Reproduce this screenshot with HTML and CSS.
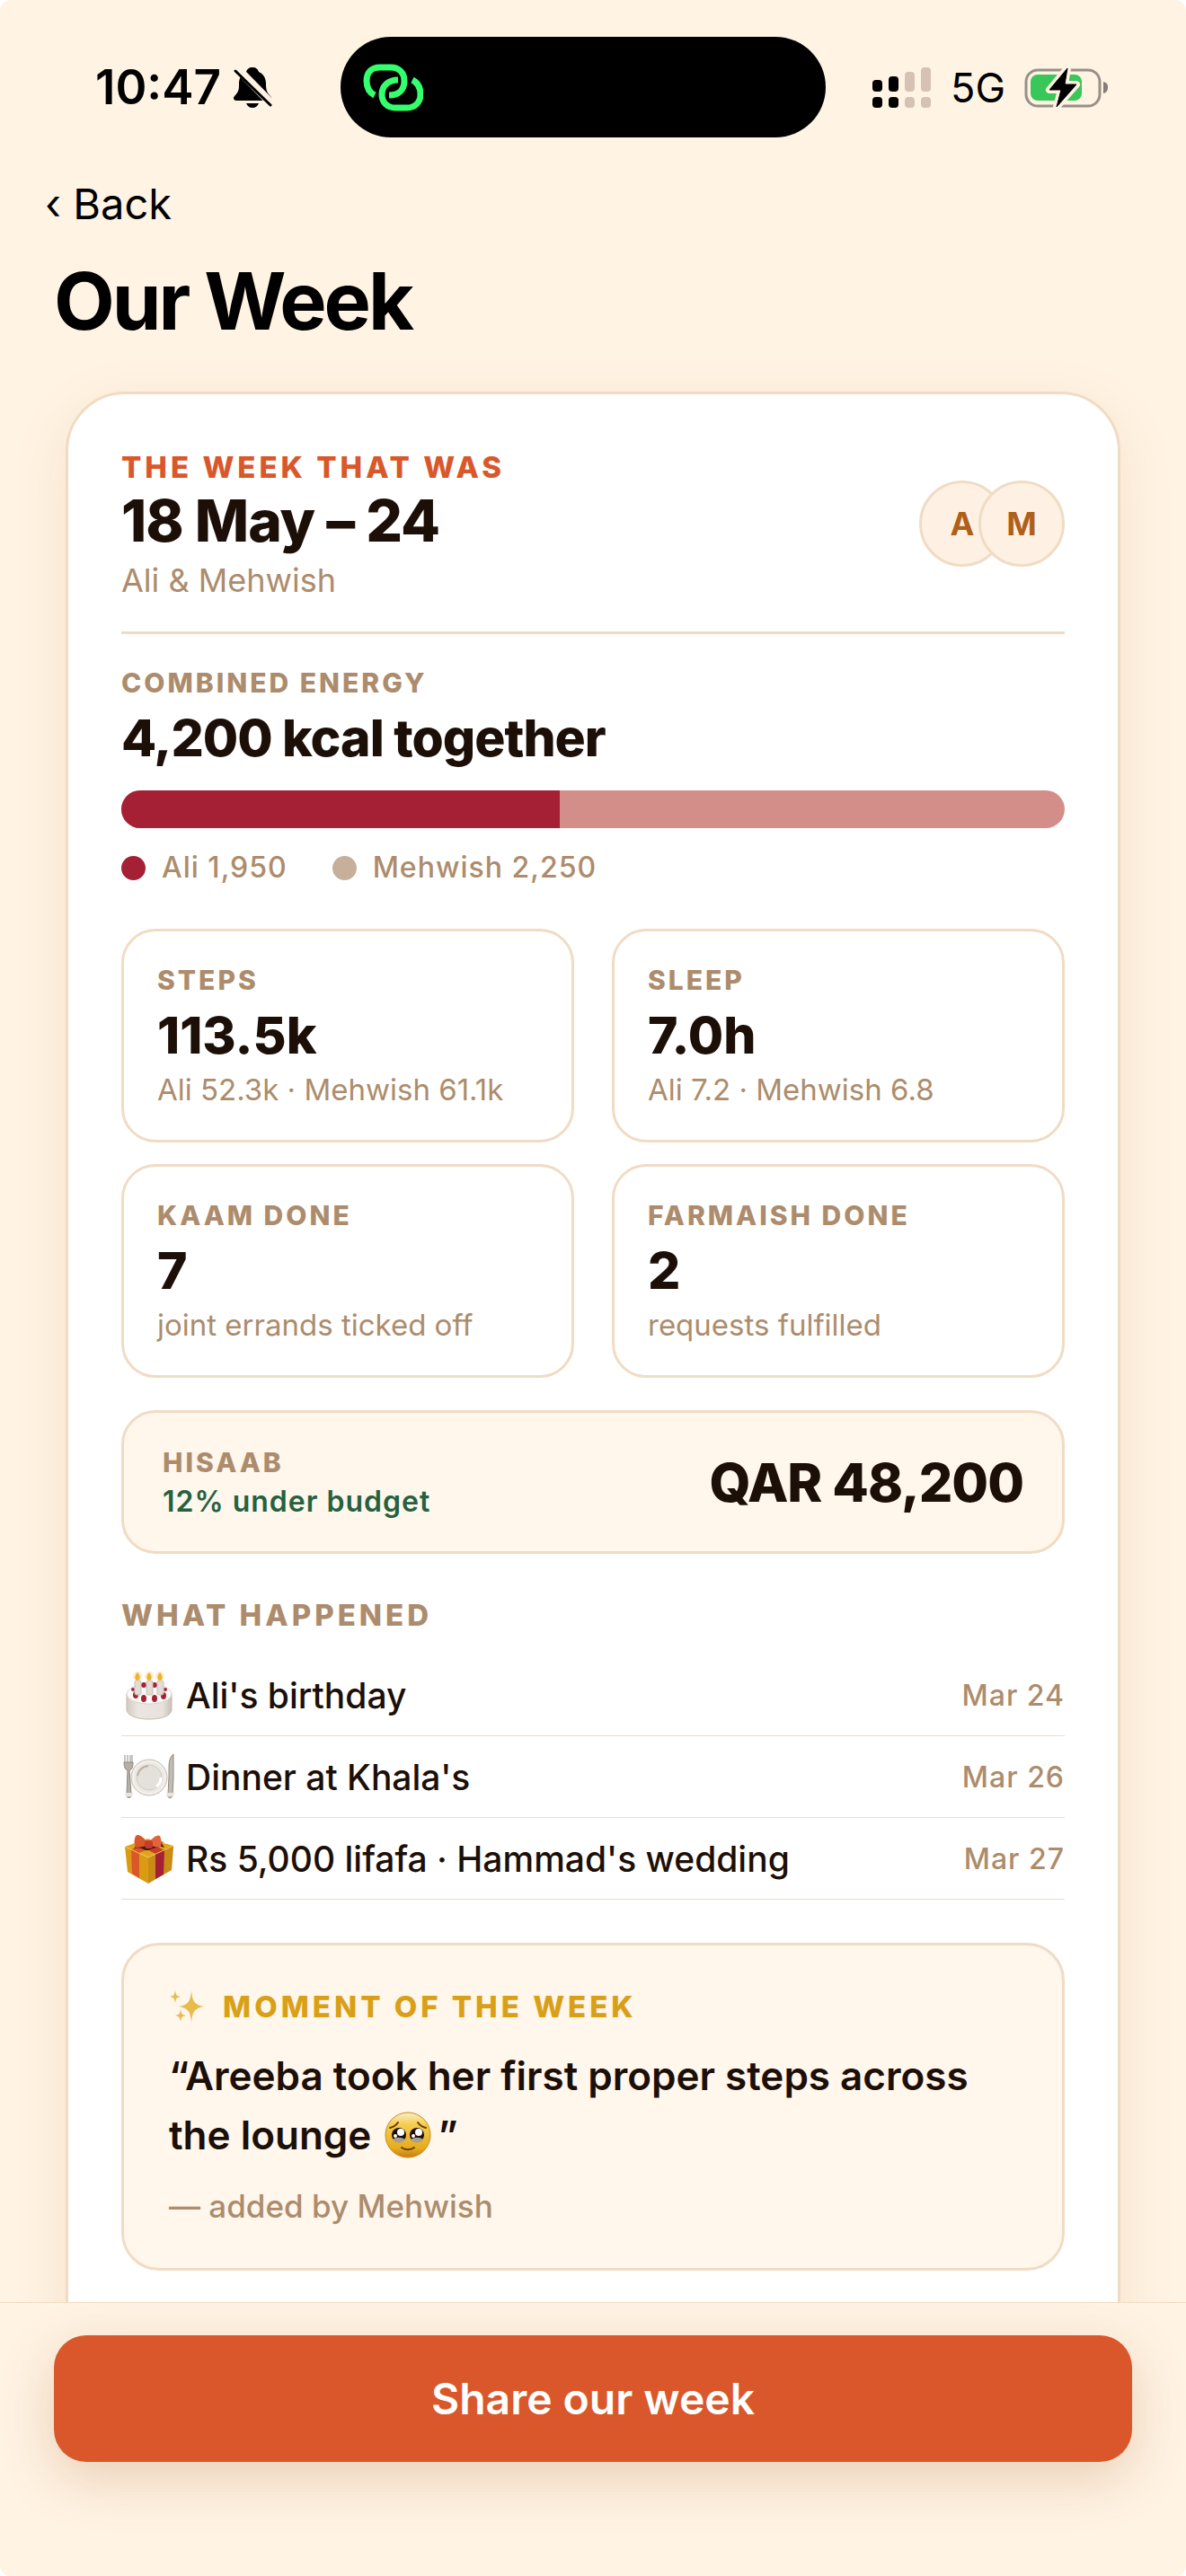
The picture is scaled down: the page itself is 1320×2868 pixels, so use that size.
FILE: index.html
```html
<!DOCTYPE html>
<html lang="en">
<head>
	<meta charset="UTF-8">
	<meta name="viewport" content="width=device-width, initial-scale=1">
	<title>Our Week</title>
	<link rel="stylesheet" href="styles.css">
</head>
<body>
	<div class="screen">
		<div class="status-bar">
			<div class="status-left">
				<span class="clock">10:47</span>
				<svg class="bell" width="43" height="45" viewBox="0 0 43 45" aria-hidden="true">
					<path d="M21 0c4 0 6 2 7 5 5 2 8 7 8 13 0 7 1 10 5 14 2 2 2 5-1 5H3c-3 0-4-3-2-5 5-5 5-8 5-14C6 12 9 7 14 5c1-3 3-5 7-5z"/>
					<path d="M14 40h14c-1 3-4 5-7 5s-6-2-7-5z"/>
					<path d="M2 -1L42 40" stroke="#fff3e4" stroke-width="9"/>
					<path d="M2 4L41 42" stroke="#000" stroke-width="3" stroke-linecap="round"/>
				</svg>
			</div>
			<div class="island">
				<svg width="67" height="53" viewBox="0 0 67 53" fill="none" stroke="#34ff6c" stroke-width="7" aria-hidden="true">
					<path d="M13 35C7 32 4 26 4 19 4 9 10 4 19 4h12c9 0 15 6 15 15 0 10-6 16-17 16"/>
					<path d="M39 18C28 18 21 25 21 34c0 9 6 15 15 15h13c9 0 15-6 15-15 0-7-3-13-9-16"/>
				</svg>
			</div>
			<div class="status-right">
				<svg width="66" height="45" viewBox="0 0 66 45" aria-hidden="true">
					<rect x="0" y="14" width="11" height="13" rx="4"/>
					<rect x="18" y="10" width="11" height="17" rx="4"/>
					<rect x="0" y="33" width="11" height="12" rx="4"/>
					<rect x="18" y="33" width="11" height="12" rx="4"/>
					<g fill="#d5c2b4">
						<rect x="36" y="5" width="11" height="22" rx="4"/>
						<rect x="54" y="0" width="11" height="27" rx="4"/>
						<rect x="36" y="33" width="11" height="12" rx="4"/>
						<rect x="54" y="33" width="11" height="12" rx="4"/>
					</g>
				</svg>
				<span class="network">5G</span>
				<svg width="94" height="45" viewBox="0 0 94 45" aria-hidden="true">
					<rect x="2" y="3" width="82" height="40" rx="13" fill="none" stroke="#989088" stroke-width="3"/>
					<path d="M88 16c4 1 5 3 5 6s-1 6-5 7z" fill="#857d75"/>
					<rect x="7" y="8" width="57" height="29" rx="8" fill="#39c759"/>
					<path d="M48 1L28 25h13l-5 19 22-25H45z" stroke="#fff3e4" stroke-width="8" stroke-linejoin="round"/>
					<path d="M48 1L28 25h13l-5 19 22-25H45z" stroke="#000" stroke-width="1" stroke-linejoin="round"/>
				</svg>
			</div>
		</div>

		<main class="content">
			<a class="back" href="#">‹ Back</a>
			<h1>Our Week</h1>

			<article class="card">
				<header class="card-head">
					<div>
						<p class="eyebrow">THE WEEK THAT WAS</p>
						<h2 class="dates">18 May – 24</h2>
						<p class="names">Ali &amp; Mehwish</p>
					</div>
					<div class="avatars">
						<span>A</span>
						<span>M</span>
					</div>
				</header>

				<section class="energy">
					<h3 class="label">COMBINED ENERGY</h3>
					<p class="total">4,200 kcal together</p>
					<div class="bar"><div style="width: 46.43%"></div></div>
					<ul class="legend">
						<li class="ali">Ali 1,950</li>
						<li class="mehwish">Mehwish 2,250</li>
					</ul>
				</section>

				<section class="stats">
					<div class="stat">
						<h3 class="label">STEPS</h3>
						<p class="figure">113.5k</p>
						<p class="note">Ali 52.3k · Mehwish 61.1k</p>
					</div>
					<div class="stat">
						<h3 class="label">SLEEP</h3>
						<p class="figure">7.0h</p>
						<p class="note">Ali 7.2 · Mehwish 6.8</p>
					</div>
					<div class="stat">
						<h3 class="label">KAAM DONE</h3>
						<p class="figure">7</p>
						<p class="note">joint errands ticked off</p>
					</div>
					<div class="stat">
						<h3 class="label">FARMAISH DONE</h3>
						<p class="figure">2</p>
						<p class="note">requests fulfilled</p>
					</div>
				</section>

				<section class="hisaab">
					<div>
						<h3 class="label">HISAAB</h3>
						<p class="budget">12% under budget</p>
					</div>
					<p class="amount">QAR 48,200</p>
				</section>

				<section class="happened">
					<h3>WHAT HAPPENED</h3>
					<ul>
						<li>
							<!-- birthday cake -->
							<svg class="emoji" width="60" height="60" viewBox="0 0 60 60" aria-hidden="true">
								<defs>
									<linearGradient id="cake" x1="0" x2="1">
										<stop offset="0" stop-color="#d3cbc2"/>
										<stop offset=".25" stop-color="#ebe6e1"/>
										<stop offset=".8" stop-color="#e7e2dd"/>
										<stop offset="1" stop-color="#c9c0b6"/>
									</linearGradient>
								</defs>
								<path d="M6 29v17c0 7 11 11 25 11s25-4 25-11V29z" fill="url(#cake)" stroke="#c5b9ac"/>
								<ellipse cx="31" cy="29" rx="25" ry="11" fill="#fbf9f7" stroke="#ddd5cc"/>
								<g fill="#a62035">
									<circle cx="13" cy="24" r="2"/><circle cx="25" cy="19" r="3"/><circle cx="37" cy="19" r="3"/><circle cx="49" cy="24" r="2"/>
									<ellipse cx="16" cy="30" rx="3" ry="4"/><ellipse cx="25" cy="34" rx="3" ry="4"/><ellipse cx="37" cy="34" rx="3" ry="4"/><ellipse cx="47" cy="31" rx="3" ry="4"/>
								</g>
								<g fill="#e2dcd5" stroke="#c9bfb4" stroke-width="1">
									<rect x="15" y="14" width="7" height="16" rx="2"/>
									<rect x="28" y="14" width="7" height="16" rx="2"/>
									<rect x="40" y="14" width="7" height="16" rx="2"/>
								</g>
								<g fill="#ffeccf">
									<circle cx="18" cy="9" r="5"/><circle cx="31" cy="9" r="5"/><circle cx="43" cy="9" r="5"/>
								</g>
								<path d="M18 5c4 4 3 9 0 9s-4-5 0-9zM31 5c4 4 3 9 0 9s-4-5 0-9zM43 5c4 4 3 9 0 9s-4-5 0-9z" fill="#ecb526"/>
							</svg>
							<span class="what">Ali's birthday</span>
							<time>Mar 24</time>
						</li>
						<li>
							<!-- fork, plate and knife -->
							<svg class="emoji" width="60" height="60" viewBox="0 0 60 60" aria-hidden="true">
								<circle cx="31" cy="31" r="20" fill="#ece8e4" stroke="#cbbfb2" stroke-width="1"/>
								<circle cx="31" cy="31" r="18" fill="none" stroke="#faf8f6" stroke-width="1"/>
								<circle cx="31" cy="31" r="14" fill="#e4e0db" stroke="#d5ccc2" stroke-width="1"/>
								<path d="M18 29c1-6 5-10 12-11" fill="none" stroke="#c1b1a2" stroke-width="2"/>
								<path d="M44 31c0 5-2 8-5 10" fill="none" stroke="#fff" stroke-width="3"/>
								<path d="M4 6v10M7 6v10M10 6v10M12 6v10" stroke="#8f8982" stroke-width="1"/>
								<path d="M3 14h10c0 6-1 8-4 9l2 26c1 6-6 6-5 0l1-26c-3-1-4-4-4-9z" fill="#b5afa8" stroke="#8f8982" stroke-width="1"/>
								<path d="M58 5v27l-1 18c0 5-6 5-5 0l1-20V20c0-8 2-13 5-15z" fill="#c3bcb4" stroke="#8f8982" stroke-width="1"/>
								<path d="M6 50h5M52 50h5" stroke="#e9e4df" stroke-width="4" stroke-linecap="round"/>
							</svg>
							<span class="what">Dinner at Khala's</span>
							<time>Mar 26</time>
						</li>
						<li>
							<!-- wrapped gift -->
							<svg class="emoji" width="60" height="60" viewBox="0 0 60 60" aria-hidden="true">
								<path d="M4 17l25-9 29 8-27 13z" fill="#e0a51c"/>
								<path d="M4 17l26 12v29L7 45z" fill="#d99b14"/>
								<path d="M58 16v2l-2 25-26 15V29z" fill="#c98a16"/>
								<path d="M11 20l9 4v28l-8-5z" fill="#d9572a"/>
								<path d="M38 25l10-4-1 27-9 5z" fill="#a62035"/>
								<path d="M11 20l29-10 8 2-28 12z" fill="#d9572a"/>
								<path d="M16 13l22 12 10-4-22-11z" fill="#c83b2c"/>
								<path d="M14 19c8-3 12 3 16 2s12-6 18-3l-4-6H20z" fill="#3a1c10"/>
								<path d="M30 14C25 6 19 2 16 5c-2 4-2 9 0 13 5 0 10-1 14-4z" fill="#d9572a"/>
								<path d="M30 14c4-7 10-11 13-9 2 4 2 9 1 12-4 1-10 0-14-3z" fill="#e0653d"/>
								<rect x="26" y="10" width="9" height="9" rx="3" fill="#c83b2c"/>
								<path d="M4 17l26 12 28-13" fill="none" stroke="#efc04a"/>
							</svg>
							<span class="what">Rs 5,000 lifafa · Hammad's wedding</span>
							<time>Mar 27</time>
						</li>
					</ul>
				</section>

				<section class="moment">
					<h3>
						<svg width="40" height="38" viewBox="0 0 40 38" fill="#e8bb4b" aria-hidden="true">
							<path d="M25 1c1 12 3 16 14 18-11 2-13 6-14 18-1-12-3-16-14-18C22 17 24 13 25 1z"/>
							<path d="M7 1c1 5 1 6 6 7-5 1-5 2-6 7-1-5-1-6-6-7 5-1 5-2 6-7zM13 22c1 5 1 6 6 7-5 1-5 2-6 7-1-5-1-6-6-7 5-1 5-2 6-7z"/>
						</svg>
						<span>MOMENT OF THE WEEK</span>
					</h3>
					<blockquote>“Areeba took her first proper steps across the lounge
						<svg class="face" width="54" height="52" viewBox="0 0 54 52" aria-hidden="true">
							<defs>
								<linearGradient id="face" x1="0" x2="0" y1="0" y2="1">
									<stop offset="0" stop-color="#fbeecb"/>
									<stop offset=".25" stop-color="#f5cf52"/>
									<stop offset=".8" stop-color="#e5ab1d"/>
									<stop offset="1" stop-color="#c47e14"/>
								</linearGradient>
							</defs>
							<circle cx="27" cy="26" r="25" fill="url(#face)" stroke="#c9891a" stroke-width="1"/>
							<circle cx="17" cy="26" r="8" fill="#1c0f08"/>
							<circle cx="37" cy="26" r="8" fill="#1c0f08"/>
							<path d="M10 31c4-3 9-3 14 0-2 4-11 5-14 0zM30 31c5-3 10-3 14 0-3 5-12 4-14 0z" fill="#a99f94"/>
							<g fill="#fff">
								<circle cx="19" cy="23" r="4"/><circle cx="39" cy="23" r="4"/>
								<circle cx="13" cy="27" r="2"/><circle cx="33" cy="27" r="2"/>
							</g>
							<path d="M7 18c4-1 7-3 9-6M47 18c-4-1-7-3-9-6" fill="none" stroke="#6b3a10" stroke-width="2" stroke-linecap="round"/>
							<path d="M20 40c4 3 10 3 14 0" fill="none" stroke="#6b3a10" stroke-width="2" stroke-linecap="round"/>
						</svg>”</blockquote>
					<p class="by">— added by Mehwish</p>
				</section>
			</article>
		</main>

		<footer class="actions">
			<button type="button">Share our week</button>
		</footer>
	</div>
</body>
</html>
```
FILE: styles.css
```css
* {
	box-sizing: border-box;
}

html {
	background: #fff;
}

body {
	margin: 0;
	color: #1c0f08;
	font-family: Inter, Roboto, "Liberation Sans", sans-serif;
}

h1, h2, h3, p, ul, blockquote {
	margin: 0;
	padding: 0;
	font-weight: 400;
}

ul {
	list-style: none;
}

svg {
	display: block;
	flex: none;
}

.screen {
	display: flex;
	flex-direction: column;
	height: 100vh;
	overflow: hidden;
	border-radius: 12px;
	background: #fff3e4;
}

/**
 * Status bar
 */
.status-bar {
	display: grid;
	grid-template-columns: 1fr 540px 1fr;
	align-items: center;
	padding: 41px 86px 0 64px;
	color: #000;
}

.status-left, .status-right {
	display: flex;
	align-items: center;
}

.status-left {
	gap: 14px;
	padding-left: 42px;
}

.status-right {
	justify-content: flex-end;
	gap: 21px;
}

.clock {
	font-size: 53px;
	font-weight: 600;
}

.network {
	font-size: 45px;
}

.island {
	display: flex;
	align-items: center;
	height: 112px;
	padding-left: 25px;
	border-radius: 56px;
	background: #000;
}

/**
 * Page
 */
.content {
	flex: 1;
	min-height: 0;
	padding: 44px 73px 60px;
	overflow-y: auto;
	scrollbar-width: none;
}

.back {
	display: block;
	width: max-content;
	margin-left: -23px;
	color: #000;
	font-size: 47px;
	line-height: 60px;
	text-decoration: none;
}

h1 {
	margin: 24px 0 47px -13px;
	color: #000;
	font-size: 88px;
	font-weight: 700;
	line-height: 108px;
	letter-spacing: -3px;
}

.card {
	padding: 57px 59px 160px;
	border: 3px solid #f0dcc4;
	border-radius: 66px;
	background: #fff;
	box-shadow: 0 18px 60px rgba(190,130,50,.14);
}

.label {
	color: #ac8c6c;
	font-size: 30px;
	font-weight: 800;
	line-height: 40px;
	letter-spacing: 3px;
}

/**
 * Card head
 */
.card-head {
	display: flex;
	justify-content: space-between;
	align-items: center;
	padding-bottom: 33px;
	border-bottom: 3px solid #f0dcc4;
}

.eyebrow {
	color: #d9572a;
	font-size: 33px;
	font-weight: 800;
	line-height: 48px;
	letter-spacing: 4px;
}

.dates {
	font-size: 64px;
	font-weight: 800;
	line-height: 72px;
	letter-spacing: -1px;
}

.names {
	margin-top: 6px;
	color: #ac8c6c;
	font-size: 36px;
	line-height: 48px;
}

.avatars {
	display: flex;
}

.avatars span {
	width: 96px;
	height: 96px;
	border: 3px solid #f0dcc4;
	border-radius: 50%;
	background: #fef1e3;
	color: #b05f1a;
	font-size: 36px;
	font-weight: 700;
	line-height: 90px;
	text-align: center;
}

.avatars span + span {
	margin-left: -30px;
}

/**
 * Combined energy
 */
.energy {
	padding-top: 34px;
}

.total {
	font-size: 57px;
	font-weight: 800;
	line-height: 84px;
	letter-spacing: -1px;
}

.bar {
	height: 42px;
	margin-top: 16px;
	border-radius: 21px;
	background: #d48e8a;
	overflow: hidden;
}

.bar div {
	height: 100%;
	background: #a62035;
}

.legend {
	display: flex;
	gap: 50px;
	margin-top: 24px;
	color: #ac8c6c;
	font-size: 32px;
	font-weight: 500;
	line-height: 40px;
	letter-spacing: 1px;
}

.legend li {
	display: flex;
	align-items: center;
	gap: 18px;
}

.legend li:before {
	content: '';
	width: 27px;
	height: 27px;
	border-radius: 50%;
}

.ali:before { background: #a62035; }
.mehwish:before { background: #c6b09c; }

/**
 * Stat tiles
 */
.stats {
	display: grid;
	grid-template-columns: 1fr 1fr;
	gap: 24px 42px;
	margin-top: 48px;
}

.stat {
	padding: 34px 37px 38px;
	border: 3px solid #f0dcc4;
	border-radius: 38px;
}

.figure {
	font-size: 57px;
	font-weight: 800;
	line-height: 84px;
}

.note {
	color: #ac8c6c;
	font-size: 33px;
	line-height: 36px;
}

.hisaab {
	display: flex;
	justify-content: space-between;
	align-items: center;
	margin-top: 36px;
	padding: 33px 43px;
	border: 3px solid #f0dcc4;
	border-radius: 38px;
	background: #fff6ec;
}

.hisaab .label {
	line-height: 44px;
}

.budget {
	color: #25613f;
	font-size: 32px;
	font-weight: 600;
	line-height: 44px;
	letter-spacing: 1px;
}

.amount {
	font-size: 59px;
	font-weight: 800;
	letter-spacing: -1px;
}

/**
 * What happened
 */
.happened {
	margin-top: 48px;
}

.happened h3 {
	margin-bottom: 24px;
	color: #ac8c6c;
	font-size: 33px;
	font-weight: 800;
	line-height: 40px;
	letter-spacing: 4px;
}

.happened li {
	display: flex;
	align-items: center;
	gap: 12px;
	height: 91px;
	border-bottom: 1px solid #f0dcc4;
	font-size: 39px;
	font-weight: 500;
}

.what {
	flex: 1;
}

.happened time {
	color: #ac8c6c;
	font-size: 32px;
	letter-spacing: 1px;
}

/**
 * Moment of the week
 */
.moment {
	margin-top: 48px;
	padding: 46px 50px 45px;
	border: 3px solid #f0dcc4;
	border-radius: 42px;
	background: #fff6ec;
}

.moment h3 {
	display: flex;
	align-items: center;
	gap: 20px;
	color: #d9a017;
	font-size: 33px;
	font-weight: 800;
	line-height: 44px;
	letter-spacing: 4px;
}

.moment blockquote {
	margin-top: 22px;
	font-size: 44px;
	font-weight: 600;
	line-height: 66px;
}

.face {
	display: inline-block;
	margin: 0 6px 0 3px;
	vertical-align: -10px;
}

.by {
	margin-top: 22px;
	color: #ac8c6c;
	font-size: 35px;
	font-weight: 500;
	line-height: 48px;
}

/**
 * Bottom action
 */
.actions {
	position: relative;
	padding: 36px 60px 127px;
	border-top: 1px solid #f0dcc4;
	background: #fff3e4;
}

.actions button {
	display: block;
	width: 100%;
	height: 141px;
	border: 0;
	border-radius: 36px;
	background: #d9572a;
	box-shadow: 0 18px 60px rgba(160,90,30,.24);
	color: #fff;
	font: 600 48px/60px Inter, Roboto, "Liberation Sans", sans-serif;
	cursor: pointer;
}
```
